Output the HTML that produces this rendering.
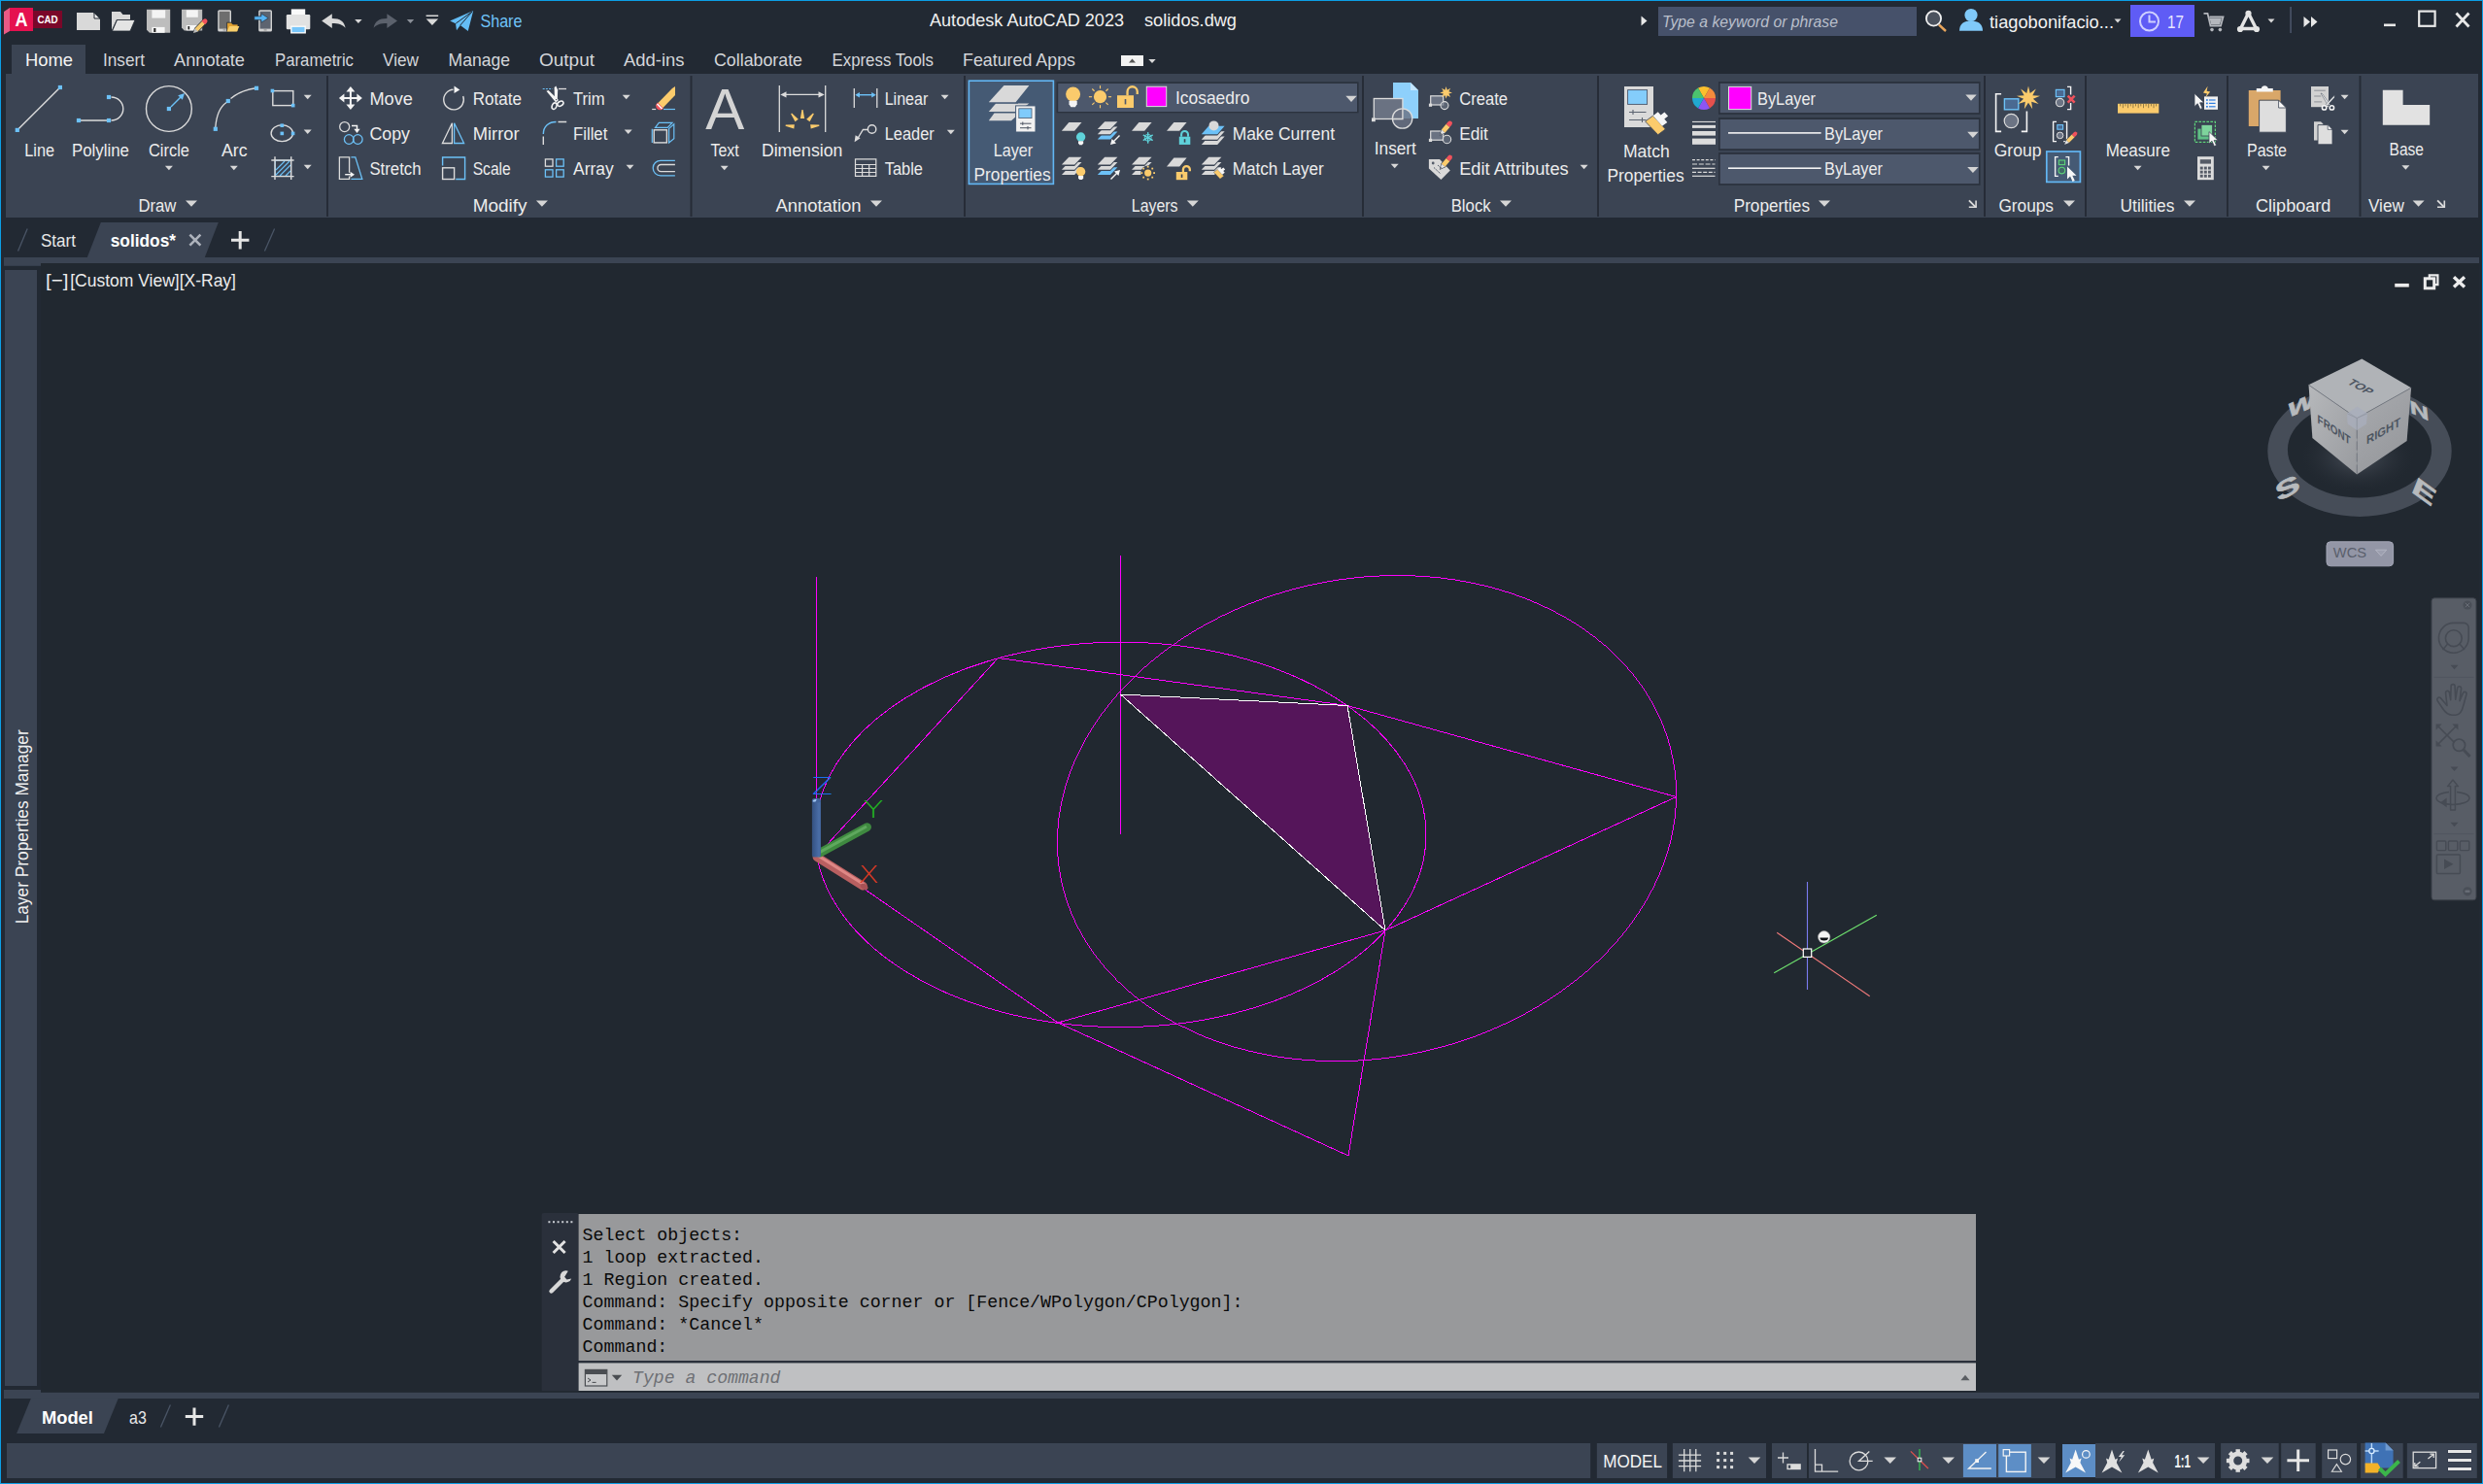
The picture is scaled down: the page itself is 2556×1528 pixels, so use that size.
<!DOCTYPE html>
<html lang="en"><head><meta charset="utf-8"><title>Autodesk AutoCAD 2023 - solidos.dwg</title>
<style>
html,body{margin:0;padding:0;background:#222933;}
body{width:2556px;height:1528px;position:relative;overflow:hidden;
 font-family:"Liberation Sans",sans-serif;}
.sec{position:absolute;overflow:hidden}
svg{display:block;position:absolute;left:0;top:0}
text{font-family:"Liberation Sans",sans-serif;white-space:pre}
text.mono{font-family:"Liberation Mono","DejaVu Sans Mono",monospace}
text.ucs{font-family:"DejaVu Sans Light","DejaVu Sans","Liberation Sans",sans-serif;font-weight:200}
.frame{position:absolute;left:0;top:0;width:2554px;height:1526px;border:1px solid #0c9fe6;pointer-events:none}
</style></head>
<body>
<div class="sec titlebar" style="left:0px;top:0px;width:2556px;height:44px"><svg width="2556" height="44" viewBox="0 0 2556 44"><rect x="0" y="0" width="2556" height="44" fill="#222933"/><path d="M4 12L10 8L10 32L4 35.5z" fill="#ea5a85"/><rect x="10" y="8" width="24" height="24" fill="#e5114f"/><rect x="34" y="11" width="30" height="18" fill="#7a0729"/><text x="15.5" y="26.8" font-size="19.5" fill="#fff" textLength="13" lengthAdjust="spacingAndGlyphs" font-weight="700">A</text><text x="38.4" y="24.2" font-size="10.8" fill="#fff" textLength="21.2" lengthAdjust="spacingAndGlyphs" font-weight="700">CAD</text><path d="M79 13h17l7 7v11h-24z" fill="#d9d9d9"/><path d="M97 13.2l5.8 5.8h-5.8z" fill="#efefef" stroke="#222933" stroke-width="1"/><path d="M115 31V12h9l2.5 3h7.5v5h-14z" fill="#d9d9d9"/><path d="M115.5 32l5-11.5h18.5l-5 11.5z" fill="#e4e4e4" stroke="#222933" stroke-width="0.8"/><path d="M151 9.8h24.2v24h-21.2l-3-3z" fill="#bdbdbd"/><rect x="156.4" y="10.4" width="13.8" height="8.2" fill="#f4f4f4"/><rect x="156.4" y="27.9" width="13.2" height="5.9" fill="#f6f6f6"/><rect x="158.2" y="29" width="2.2" height="4" fill="#2c2c2c"/><path d="M187 9.8h21.2v21.6h-18.4l-2.800-2.800z" fill="#bdbdbd"/><rect x="191.8" y="10.4" width="12" height="7.4" fill="#f4f4f4"/><rect x="191.8" y="26" width="11.6" height="5.4" fill="#f6f6f6"/><rect x="193.4" y="27" width="1.8" height="3.4" fill="#2c2c2c"/><path d="M199 34l1.600-5 8.200-8.400 3.400 3.400-8.200 8.400z" fill="#f5c869" stroke="#222933" stroke-width="0.9"/><path d="M199 34l1.600-5 3.400 3.400z" fill="#bbbbbb"/><path d="M207.600 21.800l1.800-1.800a2.400 2.400 0 0 1 3.400 3.400l-1.800 1.800z" fill="#f0525c"/><rect x="224.2" y="10.2" width="13.8" height="22.4" fill="#d2d2d2" rx="1.6"/><rect x="225.6" y="11.8" width="11" height="17.8" fill="#6e6e6e"/><rect x="229.6" y="30.4" width="3" height="1" fill="#888"/><path d="M233.600 32.600v-9.400h4.400l1.600 1.800h5.400v7.600z" fill="#e0a030" stroke="#222933" stroke-width="0.8"/><path d="M233.600 32.600l2.600-5.600h10.200l-2.600 5.600z" fill="#f8cf6c"/><rect x="266.2" y="10.2" width="13.8" height="22.4" fill="#d2d2d2" rx="1.6"/><rect x="267.6" y="11.8" width="11" height="17.8" fill="#5d6470"/><rect x="271.6" y="30.4" width="3" height="1" fill="#888"/><path d="M261.800 16.800h7.200v-2.800l7.200 4.600-7.200 4.600v-2.800h-7.200z" fill="#55b4f4" stroke="#222933" stroke-width="0.6"/><rect x="299.8" y="9.4" width="14.4" height="7" fill="#fafafa"/><rect x="294.8" y="15" width="24.5" height="15.2" fill="#e2e2e2" rx="1.2"/><rect x="299.8" y="27.2" width="14.4" height="6.6" fill="#78c6fa" stroke="#fafafa" stroke-width="1.4"/><path d="M331.200 21.600l10.600-7.400v4.800c8.600 0 12.600 3.200 13.800 9.800-3.200-3.600-7.200-4.800-13.800-4.800v5z" fill="#d9d9d9"/><path d="M365.2 19.9h7.4l-3.7 4.2z" fill="#d8d8d8"/><path d="M409 21.600l-10.600-7.400v4.800c-8.600 0-12.600 3.200-13.800 9.800 3.200-3.600 7.200-4.800 13.800-4.800v5z" fill="#5b616c"/><path d="M418.8 19.9h7.4l-3.7 4.2z" fill="#8a8f98"/><rect x="438.6" y="15.5" width="12.6" height="1.5" fill="#d9d9d9"/><path d="M438.7 19.5h12.4l-6.2 6.6z" fill="#d9d9d9"/><path d="M463.200 21.600l24-10.600-5.400 21-8-6-3.800 5.200-1-7z" fill="#64bdf6"/><path d="M469.200 24.200l17-12.400-12.400 14.200" fill="none" stroke="#222933" stroke-width="1"/><text x="494.4" y="28.4" font-size="18.2" fill="#6fc3f8" textLength="43.1" lengthAdjust="spacingAndGlyphs">Share</text><text x="957" y="26.55" font-size="18.2" fill="#f0f0f0" textLength="200" lengthAdjust="spacingAndGlyphs">Autodesk AutoCAD 2023</text><text x="1178" y="26.55" font-size="18.2" fill="#f0f0f0" textLength="95" lengthAdjust="spacingAndGlyphs">solidos.dwg</text><path d="M1689.5 16.5l6 5-6 5z" fill="#e8e8e8"/><rect x="1707" y="7" width="266" height="30" fill="#46516a"/><text x="1711" y="28.44" font-size="16.5" fill="#b9bfca" textLength="181" lengthAdjust="spacingAndGlyphs" font-style="italic">Type a keyword or phrase</text><circle cx="1990.5" cy="19" r="7.6" fill="#4b525e" stroke="#f2f2f2" stroke-width="1.8"/><line x1="1996" y1="25.5" x2="2003" y2="32" stroke="#e8a55c" stroke-width="2.4" /><circle cx="2029" cy="15.5" r="6.6" fill="#80c9f9"/><path d="M2017 31.800c0-7.400 5-10.200 12-10.200s12 2.800 12 10.200z" fill="#80c9f9"/><text x="2048" y="28.84" font-size="19" fill="#f2f2f2" textLength="128" lengthAdjust="spacingAndGlyphs">tiagobonifacio...</text><path d="M2176.5 19.5h7l-3.5 4z" fill="#d8d8d8"/><rect x="2193" y="5" width="66" height="33" fill="#5f5cf5"/><circle cx="2212.5" cy="22" r="9.5" fill="none" stroke="#cfd0ff" stroke-width="2"/><path d="M2212.5 15.5v7h6.5" fill="none" stroke="#cfd0ff" stroke-width="2"/><text x="2231" y="28.66" font-size="18.5" fill="#e6e6ff" textLength="17" lengthAdjust="spacingAndGlyphs">17</text><path d="M2268.500 13.800h4l3 12.800h10.500l2.500-9.200h-14" fill="none" stroke="#b4b7bd" stroke-width="1.8"/><path d="M2274.400 18.400h12.600l-2 7h-8.800z" fill="#b4b7bd"/><circle cx="2277" cy="30.6" r="1.8" fill="#b4b7bd"/><circle cx="2285.4" cy="30.6" r="1.8" fill="#b4b7bd"/><path d="M2306.5 29.5L2314.5 13.5L2322.5 29.5Z" fill="none" stroke="#e4e4e4" stroke-width="3.4" stroke-linejoin="round"/><circle cx="2314.5" cy="13.8" r="3.1" fill="#e4e4e4"/><circle cx="2306" cy="30" r="3.1" fill="#e4e4e4"/><circle cx="2323" cy="30" r="3.1" fill="#e4e4e4"/><path d="M2334.5 19.5h7l-3.5 4z" fill="#d8d8d8"/><rect x="2357.3" y="7" width="1.6" height="27" fill="#4a5468"/><path d="M2371.5 17l6.5 5.5-6.5 5.5zM2379 17l6.5 5.5-6.5 5.5z" fill="#e8e8e8"/><rect x="2454" y="24.5" width="12" height="2.6" fill="#e8e8e8"/><rect x="2490.2" y="11.6" width="16.4" height="15.2" fill="none" stroke="#e8e8e8" stroke-width="2.2"/><path d="M2528.5 13.5l13 14M2541.5 13.5l-13 14" fill="none" stroke="#e8e8e8" stroke-width="2.8"/></svg></div>
<div class="sec ribbontabs" style="left:0px;top:44px;width:2556px;height:32px"><svg width="2556" height="32" viewBox="0 44 2556 32"><rect x="0" y="44" width="2556" height="32" fill="#222933"/><rect x="12" y="46" width="76" height="30" fill="#3b4453"/><text x="26" y="67.55" font-size="18.2" fill="#f4f4f4" textLength="49" lengthAdjust="spacingAndGlyphs">Home</text><text x="106" y="67.55" font-size="18.2" fill="#d4d6da" textLength="43" lengthAdjust="spacingAndGlyphs">Insert</text><text x="179" y="67.55" font-size="18.2" fill="#d4d6da" textLength="73" lengthAdjust="spacingAndGlyphs">Annotate</text><text x="283" y="67.55" font-size="18.2" fill="#d4d6da" textLength="81" lengthAdjust="spacingAndGlyphs">Parametric</text><text x="394" y="67.55" font-size="18.2" fill="#d4d6da" textLength="37" lengthAdjust="spacingAndGlyphs">View</text><text x="461.5" y="67.55" font-size="18.2" fill="#d4d6da" textLength="63.5" lengthAdjust="spacingAndGlyphs">Manage</text><text x="555" y="67.55" font-size="18.2" fill="#d4d6da" textLength="57" lengthAdjust="spacingAndGlyphs">Output</text><text x="642" y="67.55" font-size="18.2" fill="#d4d6da" textLength="62.5" lengthAdjust="spacingAndGlyphs">Add-ins</text><text x="735" y="67.55" font-size="18.2" fill="#d4d6da" textLength="91" lengthAdjust="spacingAndGlyphs">Collaborate</text><text x="856.5" y="67.55" font-size="18.2" fill="#d4d6da" textLength="104.5" lengthAdjust="spacingAndGlyphs">Express Tools</text><text x="991" y="67.55" font-size="18.2" fill="#d4d6da" textLength="116" lengthAdjust="spacingAndGlyphs">Featured Apps</text><rect x="1154" y="57" width="23" height="11" fill="#f2f2f2"/><path d="M1162 64.5l3.5-4 3.5 4z" fill="#555"/><path d="M1182.3 60.9h7.4l-3.7 4.2z" fill="#d8d8d8"/></svg></div>
<div class="sec ribbon" style="left:0px;top:76px;width:2556px;height:152px"><svg width="2556" height="152" viewBox="0 76 2556 152"><rect x="0" y="76" width="2556" height="152" fill="#222933"/><rect x="6" y="76" width="2545" height="148" fill="#3b4453"/><rect x="336" y="78" width="2" height="145" fill="#262c37"/><rect x="710.5" y="78" width="2" height="145" fill="#262c37"/><rect x="992" y="78" width="2" height="145" fill="#262c37"/><rect x="1402" y="78" width="2" height="145" fill="#262c37"/><rect x="1644" y="78" width="2" height="145" fill="#262c37"/><rect x="2042" y="78" width="2" height="145" fill="#262c37"/><rect x="2146" y="78" width="2" height="145" fill="#262c37"/><rect x="2292" y="78" width="2" height="145" fill="#262c37"/><rect x="2428.5" y="78" width="2" height="145" fill="#262c37"/><line x1="17.8" y1="133.9" x2="61.9" y2="90" stroke="#dcdcdc" stroke-width="1.4" /><rect x="59.8" y="87.9" width="4.2" height="4.2" fill="#6cc1f7"/><rect x="15.7" y="131.8" width="4.2" height="4.2" fill="#6cc1f7"/><text x="25.3" y="161.2" font-size="18.3" fill="#ececec" textLength="30.8" lengthAdjust="spacingAndGlyphs">Line</text><path d="M81 124H112M114.5 124A12.3 12 0 0 0 114.5 100" fill="none" stroke="#dcdcdc" stroke-width="1.4"/><rect x="109.9" y="97.9" width="4.2" height="4.2" fill="#6cc1f7"/><rect x="78.9" y="121.9" width="4.2" height="4.2" fill="#6cc1f7"/><rect x="109.9" y="121.9" width="4.2" height="4.2" fill="#6cc1f7"/><text x="74" y="161.2" font-size="18.3" fill="#ececec" textLength="59" lengthAdjust="spacingAndGlyphs">Polyline</text><circle cx="173.9" cy="112" r="23.4" fill="none" stroke="#dcdcdc" stroke-width="1.4"/><line x1="176" y1="110" x2="187" y2="99" stroke="#6cc1f7" stroke-width="1.4" /><path d="M190 96l-6.8 2.2 4.6 4.6z" fill="#6cc1f7"/><rect x="171.8" y="109.9" width="4.2" height="4.2" fill="#6cc1f7"/><text x="153" y="161.2" font-size="18.3" fill="#ececec" textLength="42" lengthAdjust="spacingAndGlyphs">Circle</text><path d="M169.9 170.75h8l-4 4.5z" fill="#d8d8d8"/><path d="M221.8 131C223 116 228 109 233 105.5M237.5 101.5C244 96 252 92.5 262 91" fill="none" stroke="#dcdcdc" stroke-width="1.4"/><rect x="261.9" y="88.7" width="4.2" height="4.2" fill="#6cc1f7"/><rect x="232.7" y="101.9" width="4.2" height="4.2" fill="#6cc1f7"/><rect x="219.7" y="130.7" width="4.2" height="4.2" fill="#6cc1f7"/><text x="228" y="161.2" font-size="18.3" fill="#ececec" textLength="26.5" lengthAdjust="spacingAndGlyphs">Arc</text><path d="M236.8 170.75h8l-4 4.5z" fill="#d8d8d8"/><rect x="280.8" y="93.6" width="21" height="15" fill="none" stroke="#dcdcdc" stroke-width="1.4"/><rect x="278.6" y="91.7" width="3.6" height="3.6" fill="#6cc1f7"/><rect x="299.9" y="106.8" width="3.6" height="3.6" fill="#6cc1f7"/><path d="M312.7 97.75h8l-4 4.5z" fill="#d8d8d8"/><ellipse cx="290.3" cy="137.2" rx="11.2" ry="8.4" fill="none" stroke="#dcdcdc" stroke-width="1.4"/><rect x="288.5" y="127.4" width="3.6" height="3.6" fill="#6cc1f7"/><rect x="288.5" y="135.6" width="3.6" height="3.6" fill="#6cc1f7"/><rect x="299.8" y="135.6" width="3.6" height="3.6" fill="#6cc1f7"/><path d="M312.7 133.55h8l-4 4.5z" fill="#d8d8d8"/><path d="M283.3 165.2h16.2v16.2h-16.2zM284 175l9-9M284 180l14-14M288 181l11-11M294 181l5-5" fill="none" stroke="#6cc1f7" stroke-width="1.1"/><path d="M279.3 165h23.3M279.3 181.6h23.3M283 161.2v23.7M299.7 161.2v23.7" fill="none" stroke="#dcdcdc" stroke-width="1.4"/><path d="M312.7 169.75h8l-4 4.5z" fill="#d8d8d8"/><text x="142.4" y="217.6" font-size="18.3" fill="#ececec" textLength="39" lengthAdjust="spacingAndGlyphs">Draw</text><path d="M191 206.5h12l-6 6.2z" fill="#d6d6d6"/><path d="M360.9 92.9V108.9M352.9 100.9H368.9" fill="none" stroke="#f4f4f4" stroke-width="2"/><path d="M360.9 88.9l4.5 5.5h-9zM360.9 112.9l4.5 -5.5h-9zM348.9 100.9l5.5 -4.5v9zM372.9 100.9l-5.5 -4.5v9z" fill="#f4f4f4"/><text x="380.4" y="107.8" font-size="18.3" fill="#ececec" textLength="44.6" lengthAdjust="spacingAndGlyphs">Move</text><circle cx="354.7" cy="130.6" r="5" fill="none" stroke="#dcdcdc" stroke-width="1.3"/><path d="M362 129.5h5.5v4" fill="none" stroke="#f4f4f4" stroke-width="1.5"/><path d="M364.3 132.8h6.4l-3.2 4.2z" fill="#f4f4f4"/><circle cx="359.2" cy="143.5" r="4.8" fill="none" stroke="#6cc1f7" stroke-width="1.3"/><circle cx="368.3" cy="143.5" r="4.8" fill="none" stroke="#6cc1f7" stroke-width="1.3"/><text x="380.4" y="144.3" font-size="18.3" fill="#ececec" textLength="41.6" lengthAdjust="spacingAndGlyphs">Copy</text><path d="M359.600 181.600v2.800h-10.200v-22.600h10.200v16" fill="none" stroke="#dcdcdc" stroke-width="1.3"/><path d="M361.400 161.800h4.400l7 22.600h-11.400" fill="none" stroke="#6cc1f7" stroke-width="1.3"/><path d="M355.200 179.700h6" fill="none" stroke="#f4f4f4" stroke-width="1.4"/><path d="M360.600 176.700l4.400 3-4.400 3z" fill="#f4f4f4"/><text x="380.4" y="180" font-size="18.3" fill="#ececec" textLength="53.1" lengthAdjust="spacingAndGlyphs">Stretch</text><path d="M466.5 92.3A10.3 10.3 0 1 0 476.7 99" fill="none" stroke="#dcdcdc" stroke-width="1.4"/><path d="M467.5 88.6l5.8 3.8-5.8 3.6z" fill="#f4f4f4"/><text x="486.7" y="107.8" font-size="18.3" fill="#ececec" textLength="50.3" lengthAdjust="spacingAndGlyphs">Rotate</text><path d="M465.400 126.800V147.500H455.400z" fill="none" stroke="#dcdcdc" stroke-width="1.3"/><path d="M467.600 126.800V147.500H477.600z" fill="none" stroke="#6cc1f7" stroke-width="1.3"/><text x="486.7" y="144.3" font-size="18.3" fill="#ececec" textLength="48" lengthAdjust="spacingAndGlyphs">Mirror</text><path d="M455.600 170.400v-8.400h23v22.500h-9.400" fill="none" stroke="#6cc1f7" stroke-width="1.4"/><rect x="455.6" y="172.8" width="12" height="11.7" fill="none" stroke="#dcdcdc" stroke-width="1.4"/><text x="486.7" y="180" font-size="18.3" fill="#ececec" textLength="39.1" lengthAdjust="spacingAndGlyphs">Scale</text><path d="M558.7 91.5h10" fill="none" stroke="#6cc1f7" stroke-width="1.2" stroke-dasharray="2 1.2"/><path d="M575 91.5h8" fill="none" stroke="#dcdcdc" stroke-width="1.3"/><path d="M562.4 93.8L564.6 93L575 103L572.2 105.4z" fill="#f4f4f4"/><path d="M570.6 90L572.3 88.6L574.2 92.4L573.7 104L571 104z" fill="#f4f4f4"/><ellipse cx="570.6" cy="109.2" rx="2.3" ry="3.4" fill="none" stroke="#f4f4f4" stroke-width="1.5" transform="rotate(22 570.6 109.2)"/><ellipse cx="576.9" cy="106.7" rx="3.3" ry="2.3" fill="none" stroke="#f4f4f4" stroke-width="1.5" transform="rotate(-32 576.9 106.7)"/><circle cx="572.6" cy="102.6" r="0.7" fill="#3b4453"/><text x="590" y="107.8" font-size="18.3" fill="#ececec" textLength="32.7" lengthAdjust="spacingAndGlyphs">Trim</text><path d="M640.7 97.75h8l-4 4.5z" fill="#d8d8d8"/><path d="M559.3 138C559.3 130 565 125.5 572.5 125.5" fill="none" stroke="#6cc1f7" stroke-width="1.4"/><path d="M559.3 140.5V149M574.5 125.5H583.2" fill="none" stroke="#dcdcdc" stroke-width="1.4"/><text x="590" y="144.3" font-size="18.3" fill="#ececec" textLength="35.3" lengthAdjust="spacingAndGlyphs">Fillet</text><path d="M642.7 133.45h8l-4 4.5z" fill="#d8d8d8"/><rect x="561.4" y="163.9" width="7.6" height="7.3" fill="none" stroke="#dcdcdc" stroke-width="1.3"/><rect x="572.6" y="163.9" width="7.6" height="7.3" fill="none" stroke="#6cc1f7" stroke-width="1.3"/><rect x="561.4" y="174.8" width="7.6" height="7.3" fill="none" stroke="#6cc1f7" stroke-width="1.3"/><rect x="572.6" y="174.8" width="7.6" height="7.3" fill="none" stroke="#6cc1f7" stroke-width="1.3"/><text x="590" y="180" font-size="18.3" fill="#ececec" textLength="41.7" lengthAdjust="spacingAndGlyphs">Array</text><path d="M644.5 169.75h8l-4 4.5z" fill="#d8d8d8"/><path d="M675 108.5l17-17.5 3-2v9l-14 14.5z" fill="#fbcb6c"/><path d="M677 106.5a3.4 3.4 0 1 0 5 5z" fill="#f0525c" stroke="#f0525c" stroke-width="1.5"/><path d="M676.5 107l5 5" fill="none" stroke="#fff" stroke-width="1.6"/><path d="M671.2 112.5h4" fill="none" stroke="#dcdcdc" stroke-width="1.2"/><path d="M683 112.5h12" fill="none" stroke="#6cc1f7" stroke-width="1.2"/><path d="M674.500 131.400l3.800-5.100h13.700l-4.800 5.100zM688.600 132.400l5.200-4.600v14.800l-5.200 4.400zM671.300 132.800v14.200" fill="none" stroke="#6cc1f7" stroke-width="1.2"/><rect x="673.2" y="133.8" width="13.2" height="13.1" fill="none" stroke="#dcdcdc" stroke-width="1.4"/><path d="M694.9 165.3H680a7.8 7.8 0 0 0 0 15.6h14.9" fill="none" stroke="#6cc1f7" stroke-width="1.3"/><path d="M694.9 169.5H680.5a3.6 3.6 0 0 0 0 7.2h14.4" fill="none" stroke="#dcdcdc" stroke-width="1.3"/><text x="486.7" y="217.6" font-size="18.3" fill="#ececec" textLength="55.9" lengthAdjust="spacingAndGlyphs">Modify</text><path d="M551.9 206.5h12l-6 6.2z" fill="#d6d6d6"/><text x="726.3" y="132.9" font-size="58.6" fill="#d4d4d4" textLength="40" lengthAdjust="spacingAndGlyphs">A</text><text x="731.4" y="160.5" font-size="18.3" fill="#ececec" textLength="29.3" lengthAdjust="spacingAndGlyphs">Text</text><path d="M741.7 170.75h8l-4 4.5z" fill="#d8d8d8"/><path d="M802.3 88v48M849.7 88v48M808 97.4h36" fill="none" stroke="#dcdcdc" stroke-width="1.3"/><path d="M803.3 97.4l6.2-3.2v6.4zM848.7 97.4l-6.2-3.2v6.4z" fill="#dcdcdc"/><path d="M823.9 122L828.1 122L826.6 113L825.4 113z" fill="#fbcb6c"/><path d="M830.19 122.72L833.5 125.31L837.86 117.29L836.92 116.55z" fill="#fbcb6c"/><path d="M818.5 125.31L821.81 122.72L815.08 116.55L814.14 117.29z" fill="#fbcb6c"/><path d="M834.13 128.24L834.71 132.4L843.41 129.66L843.25 128.47z" fill="#fbcb6c"/><path d="M817.29 132.4L817.87 128.24L808.75 128.47L808.59 129.66z" fill="#fbcb6c"/><text x="783.9" y="160.5" font-size="18.3" fill="#ececec" textLength="83.4" lengthAdjust="spacingAndGlyphs">Dimension</text><path d="M879.3 91v20M902.8 91v20" fill="none" stroke="#dcdcdc" stroke-width="1.3"/><path d="M883 97.7h16" fill="none" stroke="#6cc1f7" stroke-width="1.4"/><path d="M880.3 97.7l4.6-2.7v5.4zM901.8 97.7l-4.6-2.7v5.4z" fill="#6cc1f7"/><text x="910.7" y="107.8" font-size="18.3" fill="#ececec" textLength="44.6" lengthAdjust="spacingAndGlyphs">Linear</text><path d="M968.6 97.75h8l-4 4.5z" fill="#d8d8d8"/><circle cx="897.6" cy="133" r="4.2" fill="none" stroke="#dcdcdc" stroke-width="1.4"/><path d="M893.4 133.5h-5l-5.5 9" fill="none" stroke="#dcdcdc" stroke-width="1.4"/><path d="M879.6 146.2l1-7 5 3z" fill="#dcdcdc"/><text x="910.7" y="144.3" font-size="18.3" fill="#ececec" textLength="51.1" lengthAdjust="spacingAndGlyphs">Leader</text><path d="M974.8 133.75h8l-4 4.5z" fill="#d8d8d8"/><path d="M880.5 163.8h21.3v17.6h-21.3zM880.5 169.5h21.3M880.5 173.5h21.3M880.5 177.5h21.3M887.6 169.5v12M894.7 169.5v12" fill="none" stroke="#dcdcdc" stroke-width="1.2"/><text x="910.7" y="180" font-size="18.3" fill="#ececec" textLength="39.3" lengthAdjust="spacingAndGlyphs">Table</text><text x="798.5" y="217.6" font-size="18.3" fill="#ececec" textLength="88" lengthAdjust="spacingAndGlyphs">Annotation</text><path d="M896 206.5h12l-6 6.2z" fill="#d6d6d6"/><rect x="997.4" y="83.2" width="87" height="106.2" fill="#455a74" stroke="#62b6f3" stroke-width="1.6"/><path d="M1017.8 124.2L1023.5 116.5L1050 116.5L1041 124.2z" fill="#d9d9d9"/><path d="M1017.8 115L1025.2 106.5L1059.4 106.5L1047.5 115z" fill="#d9d9d9"/><path d="M1018 106h30" fill="none" stroke="#455a74" stroke-width="1.3"/><path d="M1017.8 105.2L1033.5 88L1059.4 88L1045.6 105.2z" fill="#d9d9d9"/><rect x="1045.6" y="108.9" width="20.4" height="27.1" fill="#f1f1f1" stroke="#455a74" stroke-width="1"/><rect x="1048.8" y="111.8" width="13.2" height="9.8" fill="#7fcbfb" stroke="#4a5a70" stroke-width="0.8"/><path d="M1050 127.2h11.5M1050 131.7h11.5M1052.8 125.5v3.4M1058 130v3.4" fill="none" stroke="#4d5562" stroke-width="1"/><text x="1022.7" y="161" font-size="18.3" fill="#ececec" textLength="40.5" lengthAdjust="spacingAndGlyphs">Layer</text><text x="1002.5" y="185.9" font-size="18.3" fill="#ececec" textLength="79.1" lengthAdjust="spacingAndGlyphs">Properties</text><rect x="1087.6" y="84.3" width="311" height="32" fill="#2b323e"/><rect x="1089.2" y="86" width="307.8" height="29" fill="#4d586c"/><circle cx="1104.6" cy="97" r="7.5" fill="#fbcb6c"/><path d="M1100.475 103.75h8.25v3.375l-1.875 3.0h-4.5l-1.875 -3.0z" fill="#f4f4f4"/><circle cx="1132.5" cy="99.7" r="6.6" fill="#fbcb6c"/><line x1="1140.9" y1="99.7" x2="1144.1" y2="99.7" stroke="#fbcb6c" stroke-width="1.1" /><line x1="1138.44" y1="105.64" x2="1140.7" y2="107.9" stroke="#fbcb6c" stroke-width="1.1" /><line x1="1132.5" y1="108.1" x2="1132.5" y2="111.3" stroke="#fbcb6c" stroke-width="1.1" /><line x1="1126.56" y1="105.64" x2="1124.3" y2="107.9" stroke="#fbcb6c" stroke-width="1.1" /><line x1="1124.1" y1="99.7" x2="1120.9" y2="99.7" stroke="#fbcb6c" stroke-width="1.1" /><line x1="1126.56" y1="93.76" x2="1124.3" y2="91.5" stroke="#fbcb6c" stroke-width="1.1" /><line x1="1132.5" y1="91.3" x2="1132.5" y2="88.1" stroke="#fbcb6c" stroke-width="1.1" /><line x1="1138.44" y1="93.76" x2="1140.7" y2="91.5" stroke="#fbcb6c" stroke-width="1.1" /><rect x="1150" y="98.2" width="17" height="12.8" fill="#fbcb6c"/><rect x="1157.7" y="102.04" width="1.6" height="5.38" fill="#4d586c"/><path d="M1160.54 98.2v-3.84a5.1 5.1 0 0 1 10.2 0v2.5600000000000005" fill="none" stroke="#fbcb6c" stroke-width="2.3"/><rect x="1180.3" y="89.2" width="20.4" height="20.4" fill="#ff00ff" stroke="#dedede" stroke-width="1"/><text x="1210" y="107.2" font-size="18.6" fill="#ececec" textLength="76.4" lengthAdjust="spacingAndGlyphs">Icosaedro</text><path d="M1385.3 98.8h11.4l-5.7 6.2z" fill="#d4d4d4"/><path d="M1100.3 126L1113.5 126L1106.1 134.8L1092.9 134.8z" fill="#d9d9d9"/><circle cx="1112.6" cy="141" r="4.7" fill="#5fd2da"/><path d="M1110.0149999999999 145.23h5.170000000000001v2.115l-1.175 1.8800000000000001h-2.82l-1.175 -1.8800000000000001z" fill="#f4f4f4"/><path d="M1137.2 135.6L1150.4 135.6L1143 143.4L1129.8 143.4z" fill="#6cc1f7"/><path d="M1137.2 131.7L1150.4 131.7L1143 139.5L1129.8 139.5z" fill="#3b4453"/><path d="M1137.2 130.4L1150.4 130.4L1143 138.2L1129.8 138.2z" fill="#d9d9d9"/><path d="M1137.2 126.5L1150.4 126.5L1143 134.3L1129.8 134.3z" fill="#3b4453"/><path d="M1137.2 125.2L1150.4 125.2L1143 133L1129.8 133z" fill="#d9d9d9"/><path d="M1152.5 139.5l-6.5 6.5" fill="none" stroke="#f4f4f4" stroke-width="1.4"/><path d="M1143 149l1.6-6 4.4 4.4z" fill="#f4f4f4"/><path d="M1172.4 126L1185.6 126L1178.2 134.8L1165 134.8z" fill="#d9d9d9"/><circle cx="1181.7" cy="141.8" r="3.47" fill="none" stroke="#5fd2da" stroke-width="1"/><line x1="1176.85" y1="139" x2="1186.55" y2="144.6" stroke="#5fd2da" stroke-width="1.1" /><line x1="1181.7" y1="136.2" x2="1181.7" y2="147.4" stroke="#5fd2da" stroke-width="1.1" /><line x1="1186.55" y1="139" x2="1176.85" y2="144.6" stroke="#5fd2da" stroke-width="1.1" /><line x1="1186.55" y1="144.6" x2="1176.85" y2="139" stroke="#5fd2da" stroke-width="1.1" /><line x1="1181.7" y1="147.4" x2="1181.7" y2="136.2" stroke="#5fd2da" stroke-width="1.1" /><line x1="1176.85" y1="144.6" x2="1186.55" y2="139" stroke="#5fd2da" stroke-width="1.1" /><path d="M1208.4 126L1221.6 126L1214.2 134.8L1201 134.8z" fill="#d9d9d9"/><rect x="1213.8" y="140.7" width="11.5" height="8.2" fill="#5fd2da"/><rect x="1218.75" y="143.16" width="1.6" height="3.44" fill="#3b4453"/><path d="M1216.1 140.7v-2.296a3.4499999999999997 3.4499999999999997 0 0 1 6.8999999999999995 0v2.296" fill="none" stroke="#5fd2da" stroke-width="2.1"/><path d="M1244.2 140.6L1260.6 140.6L1253.2 149L1236.8 149z" fill="#d9d9d9"/><path d="M1244.2 136.6L1260.6 136.6L1253.2 145L1236.8 145z" fill="#3b4453"/><path d="M1244.2 135.3L1260.6 135.3L1253.2 143.7L1236.8 143.7z" fill="#d9d9d9"/><path d="M1244.2 131.2L1260.6 131.2L1253.2 139.6L1236.8 139.6z" fill="#3b4453"/><path d="M1244.2 129.8L1260.6 129.8L1253.2 138.2L1236.8 138.2z" fill="#6cc1f7"/><circle cx="1249.5" cy="129.4" r="5" fill="#d9d9d9"/><text x="1268.7" y="144.3" font-size="18.3" fill="#ececec" textLength="105.3" lengthAdjust="spacingAndGlyphs">Make Current</text><path d="M1100.3 172.2L1113.5 172.2L1106.1 180L1092.9 180z" fill="#d9d9d9"/><path d="M1100.3 168.3L1113.5 168.3L1106.1 176.1L1092.9 176.1z" fill="#3b4453"/><path d="M1100.3 167L1113.5 167L1106.1 174.8L1092.9 174.8z" fill="#d9d9d9"/><path d="M1100.3 163.1L1113.5 163.1L1106.1 170.9L1092.9 170.9z" fill="#3b4453"/><path d="M1100.3 161.8L1113.5 161.8L1106.1 169.6L1092.9 169.6z" fill="#d9d9d9"/><circle cx="1112.6" cy="176.8" r="4.7" fill="#fbcb6c"/><path d="M1110.0149999999999 181.03h5.170000000000001v2.115l-1.175 1.8800000000000001h-2.82l-1.175 -1.8800000000000001z" fill="#f4f4f4"/><path d="M1137.2 172.2L1150.4 172.2L1143 180L1129.8 180z" fill="#6cc1f7"/><path d="M1137.2 168.3L1150.4 168.3L1143 176.1L1129.8 176.1z" fill="#3b4453"/><path d="M1137.2 167L1150.4 167L1143 174.8L1129.8 174.8z" fill="#d9d9d9"/><path d="M1137.2 163.1L1150.4 163.1L1143 170.9L1129.8 170.9z" fill="#3b4453"/><path d="M1137.2 161.8L1150.4 161.8L1143 169.6L1129.8 169.6z" fill="#d9d9d9"/><path d="M1143.5 184.5l6.5-6.5" fill="none" stroke="#f4f4f4" stroke-width="1.4"/><path d="M1153 175l-1.6 6-4.4-4.4z" fill="#f4f4f4"/><path d="M1172.4 172.2L1185.6 172.2L1178.2 180L1165 180z" fill="#d9d9d9"/><path d="M1172.4 168.3L1185.6 168.3L1178.2 176.1L1165 176.1z" fill="#3b4453"/><path d="M1172.4 167L1185.6 167L1178.2 174.8L1165 174.8z" fill="#d9d9d9"/><path d="M1172.4 163.1L1185.6 163.1L1178.2 170.9L1165 170.9z" fill="#3b4453"/><path d="M1172.4 161.8L1185.6 161.8L1178.2 169.6L1165 169.6z" fill="#d9d9d9"/><circle cx="1181.7" cy="178.1" r="7.6" fill="#3b4453"/><circle cx="1181.7" cy="178.1" r="3.6" fill="#fbcb6c"/><rect x="1187.2" y="177.2" width="1.8" height="1.8" fill="#fbcb6c"/><rect x="1185.33" y="181.73" width="1.8" height="1.8" fill="#fbcb6c"/><rect x="1180.8" y="183.6" width="1.8" height="1.8" fill="#fbcb6c"/><rect x="1176.27" y="181.73" width="1.8" height="1.8" fill="#fbcb6c"/><rect x="1174.4" y="177.2" width="1.8" height="1.8" fill="#fbcb6c"/><rect x="1176.27" y="172.67" width="1.8" height="1.8" fill="#fbcb6c"/><rect x="1180.8" y="170.8" width="1.8" height="1.8" fill="#fbcb6c"/><rect x="1185.33" y="172.67" width="1.8" height="1.8" fill="#fbcb6c"/><path d="M1208.4 162.6L1221.6 162.6L1214.2 171.4L1201 171.4z" fill="#d9d9d9"/><rect x="1210.8" y="177" width="11.5" height="8.2" fill="#fbcb6c"/><rect x="1215.75" y="179.46" width="1.6" height="3.44" fill="#3b4453"/><path d="M1217.93 177v-2.4599999999999995a3.4499999999999997 3.4499999999999997 0 0 1 6.8999999999999995 0v1.64" fill="none" stroke="#fbcb6c" stroke-width="2.3"/><path d="M1244.2 172.2L1257.4 172.2L1250 180L1236.8 180z" fill="#d9d9d9"/><path d="M1244.2 168.3L1257.4 168.3L1250 176.1L1236.8 176.1z" fill="#3b4453"/><path d="M1244.2 167L1257.4 167L1250 174.8L1236.8 174.8z" fill="#d9d9d9"/><path d="M1244.2 163.1L1257.4 163.1L1250 170.9L1236.8 170.9z" fill="#3b4453"/><path d="M1244.2 161.8L1257.4 161.8L1250 169.6L1236.8 169.6z" fill="#d9d9d9"/><g transform="translate(1249.4 173.6) scale(0.8)" ><path d="M0 4.6l5-3.600 8 8.600-4.800 3.600z" fill="#fbcb6c" stroke="#3b4453" stroke-width="0.5"/><path d="M5 1l3.200-2.400 1.800 2 2.400-1.900 2.300 2.500-2.400 1.900 1.900 2.100-3.300 2.400z" fill="#f6f6f6"/></g><text x="1268.7" y="179.9" font-size="18.3" fill="#ececec" textLength="94.1" lengthAdjust="spacingAndGlyphs">Match Layer</text><text x="1164.8" y="217.6" font-size="18.3" fill="#ececec" textLength="47.7" lengthAdjust="spacingAndGlyphs">Layers</text><path d="M1221.8 206.5h12l-6 6.2z" fill="#d6d6d6"/><path d="M1434 84.9h18l8 8v29h-26z" fill="#8ed0fb"/><path d="M1452 84.9l8 8h-8z" fill="#c4e6fd"/><rect x="1414.3" y="101.5" width="29.6" height="21" fill="#6a7282" stroke="#dcdcdc" stroke-width="1.3"/><circle cx="1443.6" cy="122" r="10.2" fill="#6a7282" stroke="#dcdcdc" stroke-width="1.3" fill-opacity="0.82"/><path d="M1443.9 112v10.5h-10.5" fill="none" stroke="#dcdcdc" stroke-width="1.3"/><rect x="1412" y="121.4" width="3.8" height="3.8" fill="#dcdcdc"/><text x="1414.8" y="159.1" font-size="18.3" fill="#ececec" textLength="43.1" lengthAdjust="spacingAndGlyphs">Insert</text><path d="M1431.7 168.75h8l-4 4.5z" fill="#d8d8d8"/><rect x="1472.7" y="98.8" width="13" height="9.2" fill="#6a7282" stroke="#dcdcdc" stroke-width="1.2"/><rect x="1470.9" y="106.6" width="3.2" height="3.2" fill="#dcdcdc"/><circle cx="1487" cy="108.6" r="4" fill="#6a7282" stroke="#dcdcdc" stroke-width="1.1" fill-opacity="0.7"/><path d="M1488.6 89L1489.75 92.63L1493.13 90.87L1491.37 94.25L1495 95.4L1491.37 96.55L1493.13 99.93L1489.75 98.17L1488.6 101.8L1487.45 98.17L1484.07 99.93L1485.83 96.55L1482.2 95.4L1485.83 94.25L1484.07 90.87L1487.45 92.63z" fill="#fbcb6c"/><text x="1502.2" y="107.8" font-size="18.3" fill="#ececec" textLength="49.8" lengthAdjust="spacingAndGlyphs">Create</text><rect x="1472.7" y="135" width="13" height="9.2" fill="#6a7282" stroke="#dcdcdc" stroke-width="1.2"/><rect x="1470.9" y="142.8" width="3.2" height="3.2" fill="#dcdcdc"/><circle cx="1489.5" cy="143.5" r="4.2" fill="#6a7282" stroke="#dcdcdc" stroke-width="1.1" fill-opacity="0.7"/><path d="M1482.6 138.8L1487.53 136.67L1494.44 128.44L1490.76 125.36L1483.85 133.58z" fill="#3b4453" stroke="#3b4453" stroke-width="1.1"/><path d="M1487.53 136.67L1492.38 130.89L1488.7 127.81L1483.85 133.58z" fill="#fbcb6c"/><path d="M1482.6 138.8L1487.53 136.67L1483.85 133.58z" fill="#e4e4e4"/><path d="M1482.6 138.8L1484.46 138.01L1483.06 136.84z" fill="#6a6f78"/><path d="M1492.38 130.89L1494.44 128.44A2.4 2.4 0 0 0 1490.76 125.36L1488.7 127.81z" fill="#f0525c"/><text x="1502.2" y="144.3" font-size="18.3" fill="#ececec" textLength="29.7" lengthAdjust="spacingAndGlyphs">Edit</text><path d="M1470.9 164L1482 164L1492.8 175.6L1483.4 185L1470.9 173.6z" fill="#d9d9d9"/><circle cx="1475.2" cy="168" r="1.4" fill="#555d6a"/><path d="M1476 172.5l7 6.5M1480 170l4 3.6" fill="none" stroke="#555d6a" stroke-width="1" stroke-dasharray="2 1"/><path d="M1482.6 173.9L1487.53 171.77L1494.44 163.54L1490.76 160.46L1483.85 168.68z" fill="#3b4453" stroke="#3b4453" stroke-width="1.1"/><path d="M1487.53 171.77L1492.38 165.99L1488.7 162.91L1483.85 168.68z" fill="#fbcb6c"/><path d="M1482.6 173.9L1487.53 171.77L1483.85 168.68z" fill="#e4e4e4"/><path d="M1482.6 173.9L1484.46 173.11L1483.06 171.94z" fill="#6a6f78"/><path d="M1492.38 165.99L1494.44 163.54A2.4 2.4 0 0 0 1490.76 160.46L1488.7 162.91z" fill="#f0525c"/><text x="1502.2" y="180" font-size="18.3" fill="#ececec" textLength="112.5" lengthAdjust="spacingAndGlyphs">Edit Attributes</text><path d="M1626.6 169.75h8l-4 4.5z" fill="#d8d8d8"/><text x="1493.7" y="217.6" font-size="18.3" fill="#ececec" textLength="41" lengthAdjust="spacingAndGlyphs">Block</text><path d="M1544 206.5h12l-6 6.2z" fill="#d6d6d6"/><rect x="1672" y="89" width="30" height="42" fill="#dadada"/><rect x="1675.6" y="92.6" width="20" height="14.8" fill="#84cdfb" stroke="#4a5568" stroke-width="0.9"/><path d="M1677 115.5h17.5M1677 123.5h17.5M1681 113v5M1690.5 121v5" fill="none" stroke="#5b6370" stroke-width="1.1"/><g transform="translate(1693.6 117.6) scale(1.6)" ><path d="M0 4.6l5-3.600 8 8.600-4.800 3.600z" fill="#fbcb6c" stroke="#3b4453" stroke-width="0.5"/><path d="M5 1l3.200-2.400 1.800 2 2.400-1.900 2.300 2.500-2.400 1.900 1.900 2.100-3.300 2.400z" fill="#f6f6f6"/></g><text x="1670.9" y="161.7" font-size="18.3" fill="#ececec" textLength="47.9" lengthAdjust="spacingAndGlyphs">Match</text><text x="1654.4" y="186.5" font-size="18.3" fill="#ececec" textLength="79.2" lengthAdjust="spacingAndGlyphs">Properties</text><path d="M1754 101L1748 90.61A12 12 0 0 1 1760 90.61z" fill="#fbbf2d"/><path d="M1754 101L1760 90.61A12 12 0 0 1 1766 101z" fill="#f58b3c"/><path d="M1754 101L1766 101A12 12 0 0 1 1760 111.39z" fill="#e5504d"/><path d="M1754 101L1760 111.39A12 12 0 0 1 1748 111.39z" fill="#8d55f2"/><path d="M1754 101L1748 111.39A12 12 0 0 1 1742 101z" fill="#21a8d0"/><path d="M1754 101L1742 101A12 12 0 0 1 1748 90.61z" fill="#4cc36e"/><rect x="1742" y="124.9" width="24" height="1.1" fill="#dcdcdc"/><rect x="1742" y="128.9" width="24" height="3" fill="#dcdcdc"/><rect x="1742" y="135" width="24" height="4.6" fill="#dcdcdc"/><rect x="1742" y="142.6" width="24" height="6.2" fill="#dcdcdc"/><path d="M1742 164.6h23.5" fill="none" stroke="#dcdcdc" stroke-width="1.2" stroke-dasharray="3 1.6"/><path d="M1742 169h23.5" fill="none" stroke="#dcdcdc" stroke-width="1.2" stroke-dasharray="5 1.8"/><path d="M1742 173.3h23.5" fill="none" stroke="#dcdcdc" stroke-width="1.2" stroke-dasharray="24"/><path d="M1742 177.4h23.5" fill="none" stroke="#dcdcdc" stroke-width="1.2" stroke-dasharray="4 1.6"/><path d="M1742 181.3h23.5" fill="none" stroke="#dcdcdc" stroke-width="1.2" stroke-dasharray="24"/><rect x="1769" y="84" width="269.6" height="33.8" fill="#2b323e"/><rect x="1770.7" y="85.9" width="266.2" height="30.2" fill="#4d586c"/><rect x="1769" y="121.1" width="269.6" height="33.8" fill="#2b323e"/><rect x="1770.7" y="123" width="266.2" height="30.2" fill="#4d586c"/><rect x="1769" y="157" width="269.6" height="33.8" fill="#2b323e"/><rect x="1770.7" y="158.9" width="266.2" height="30.2" fill="#4d586c"/><rect x="1779.5" y="89.4" width="23.2" height="23.2" fill="#ff00ff" stroke="#dedede" stroke-width="1"/><text x="1809" y="107.6" font-size="18.6" fill="#ececec" textLength="60" lengthAdjust="spacingAndGlyphs">ByLayer</text><path d="M2023.3 97.5h11.4l-5.7 6.2z" fill="#d4d4d4"/><rect x="1779" y="136.1" width="95.6" height="1.6" fill="#f4f4f4"/><text x="1878" y="144" font-size="18.6" fill="#ececec" textLength="60" lengthAdjust="spacingAndGlyphs">ByLayer</text><path d="M2025.2 135.7h11.4l-5.7 6.2z" fill="#d4d4d4"/><rect x="1779" y="172.4" width="95.6" height="1.6" fill="#f4f4f4"/><text x="1878" y="180.2" font-size="18.6" fill="#ececec" textLength="60" lengthAdjust="spacingAndGlyphs">ByLayer</text><path d="M2025.2 171.9h11.4l-5.7 6.2z" fill="#d4d4d4"/><text x="1784.7" y="217.6" font-size="18.3" fill="#ececec" textLength="78.3" lengthAdjust="spacingAndGlyphs">Properties</text><path d="M1872 206.5h12l-6 6.2z" fill="#d6d6d6"/><path d="M2026.8999999999999 206.4l7 7" fill="none" stroke="#dcdcdc" stroke-width="1.9"/><path d="M2034.1 206.4v6.900h-7.300" fill="none" stroke="#dcdcdc" stroke-width="1.6"/><path d="M2060.1 96.8H2054.6V135.4H2060.1" fill="none" stroke="#f4f4f4" stroke-width="1.6"/><path d="M2080.8 135.4H2086.4V114.5" fill="none" stroke="#f4f4f4" stroke-width="1.6"/><rect x="2063.4" y="101.8" width="14.4" height="11" fill="#4a6a92" stroke="#6cc1f7" stroke-width="1.4"/><circle cx="2070.4" cy="124.5" r="7.2" fill="#6c7484" stroke="#dcdcdc" stroke-width="1.2"/><path d="M2088 88.6L2089.71 96.1L2095.84 91.45L2092.33 98.3L2100.01 98.68L2092.92 101.67L2098.57 106.9L2091.21 104.63L2092.17 112.26L2088 105.8L2083.83 112.26L2084.79 104.63L2077.43 106.9L2083.08 101.67L2075.99 98.68L2083.67 98.3L2080.16 91.45L2086.29 96.1z" fill="#fbcb6c"/><text x="2052.7" y="161" font-size="18.3" fill="#ececec" textLength="48.7" lengthAdjust="spacingAndGlyphs">Group</text><rect x="2116.4" y="92.4" width="8.6" height="7.2" fill="#4a6a92" stroke="#6cc1f7" stroke-width="1.2"/><circle cx="2120.6" cy="105.6" r="4.2" fill="#6c7484" stroke="#dcdcdc" stroke-width="1.1"/><path d="M2128 89.4h3.6v8M2131.6 106v6.6H2128" fill="none" stroke="#f4f4f4" stroke-width="1.4"/><path d="M2128.6 98.6l7 7M2135.6 98.6l-7 7" fill="none" stroke="#f0525c" stroke-width="2.6"/><path d="M2117.0 125.4H2113.6V145.6H2117.0" fill="none" stroke="#f4f4f4" stroke-width="1.4"/><path d="M2124.2 125.4H2127.6V145.6H2124.2" fill="none" stroke="#f4f4f4" stroke-width="1.4"/><rect x="2117.8" y="128.6" width="5.8" height="4.6" fill="#4a6a92" stroke="#6cc1f7" stroke-width="1.1"/><circle cx="2120.6" cy="139.4" r="3.3" fill="#6c7484" stroke="#dcdcdc" stroke-width="1"/><path d="M2125 149L2129.81 147.02L2137.81 139.01L2134.99 136.19L2126.98 144.19z" fill="#3b4453" stroke="#3b4453" stroke-width="1.1"/><path d="M2129.81 147.02L2135.55 141.28L2132.72 138.45L2126.98 144.19z" fill="#fbcb6c"/><path d="M2125 149L2129.81 147.02L2126.98 144.19z" fill="#e4e4e4"/><path d="M2125 149L2126.81 148.26L2125.74 147.19z" fill="#6a6f78"/><path d="M2135.55 141.28L2137.81 139.01A2.0 2.0 0 0 0 2134.99 136.19L2132.72 138.45z" fill="#f0525c"/><rect x="2106.8" y="156" width="34.6" height="31.4" fill="#455a74" stroke="#62b6f3" stroke-width="1.7"/><path d="M2118.7999999999997 161.6H2115.6V181.4H2118.7999999999997" fill="none" stroke="#f4f4f4" stroke-width="1.4"/><path d="M2126.4 161.6h3.2v9" fill="none" stroke="#f4f4f4" stroke-width="1.4"/><rect x="2119.4" y="165" width="6.2" height="4.6" fill="#3f6a66" stroke="#5ed27a" stroke-width="1.1"/><circle cx="2122.4" cy="175.6" r="3.3" fill="#3f6a66" stroke="#5ed27a" stroke-width="1.1"/><g transform="translate(2128 171.6) scale(0.95)" ><path d="M0 0v13.5l3.2-3 2.6 5.8 2.4-1.1-2.6-5.6h4.4z" fill="#f6f6f6"/></g><text x="2057.4" y="217.6" font-size="18.3" fill="#ececec" textLength="56.6" lengthAdjust="spacingAndGlyphs">Groups</text><path d="M2124 206.5h12l-6 6.2z" fill="#d6d6d6"/><rect x="2180" y="106.8" width="42.3" height="9.8" fill="#fbcb6c"/><rect x="2182.24" y="106.8" width="0.9" height="2.6" fill="#8a7440"/><rect x="2184.88" y="106.8" width="0.9" height="4.4" fill="#8a7440"/><rect x="2187.52" y="106.8" width="0.9" height="2.6" fill="#8a7440"/><rect x="2190.16" y="106.8" width="0.9" height="4.4" fill="#8a7440"/><rect x="2192.8" y="106.8" width="0.9" height="2.6" fill="#8a7440"/><rect x="2195.44" y="106.8" width="0.9" height="4.4" fill="#8a7440"/><rect x="2198.08" y="106.8" width="0.9" height="2.6" fill="#8a7440"/><rect x="2200.72" y="106.8" width="0.9" height="4.4" fill="#8a7440"/><rect x="2203.36" y="106.8" width="0.9" height="2.6" fill="#8a7440"/><rect x="2206" y="106.8" width="0.9" height="4.4" fill="#8a7440"/><rect x="2208.64" y="106.8" width="0.9" height="2.6" fill="#8a7440"/><rect x="2211.28" y="106.8" width="0.9" height="4.4" fill="#8a7440"/><rect x="2213.92" y="106.8" width="0.9" height="2.6" fill="#8a7440"/><rect x="2216.56" y="106.8" width="0.9" height="4.4" fill="#8a7440"/><rect x="2219.2" y="106.8" width="0.9" height="2.6" fill="#8a7440"/><text x="2167.7" y="161" font-size="18.3" fill="#ececec" textLength="66.2" lengthAdjust="spacingAndGlyphs">Measure</text><path d="M2196.6 170.75h8l-4 4.5z" fill="#d8d8d8"/><path d="M2272 96.5l-4-1 4.6-6.8-1 5 3.6 0.8-5.4 6.6z" fill="#fbcb6c"/><rect x="2269" y="99.4" width="14" height="13.4" fill="#f1f1f1"/><rect x="2271" y="102.2" width="1.8" height="1.6" fill="#2f7fe0"/><rect x="2274" y="102.4" width="6.6" height="1.2" fill="#2f7fe0"/><rect x="2271" y="105.6" width="1.8" height="1.6" fill="#2f7fe0"/><rect x="2274" y="105.8" width="6.6" height="1.2" fill="#2f7fe0"/><rect x="2271" y="109" width="1.8" height="1.6" fill="#2f7fe0"/><rect x="2274" y="109.2" width="6.6" height="1.2" fill="#2f7fe0"/><g transform="translate(2259 96.2) scale(1)" ><path d="M0 0v13.5l3.2-3 2.6 5.8 2.4-1.1-2.6-5.6h4.4z" fill="#f6f6f6" stroke="#3b4453" stroke-width="0.8"/></g><rect x="2259.4" y="125.4" width="21" height="21" fill="none" stroke="#5ed27a" stroke-width="1.2" stroke-dasharray="2.6 1.4"/><rect x="2262.4" y="132.6" width="11.6" height="11" fill="#5fbf85"/><rect x="2266" y="128.4" width="11.6" height="11.6" fill="#7ed49c" stroke="#3b4453" stroke-width="0.8"/><g transform="translate(2274 135.6) scale(0.92)" ><path d="M0 0v13.5l3.2-3 2.6 5.8 2.4-1.1-2.6-5.6h4.4z" fill="#f6f6f6" stroke="#3b4453" stroke-width="0.8"/></g><rect x="2262" y="161.2" width="16.8" height="24" fill="#dcdcdc"/><rect x="2264.8" y="164.2" width="11.2" height="4.4" fill="#555b66"/><rect x="2264.8" y="171.6" width="2.9" height="2.9" fill="#555b66"/><rect x="2268.9" y="171.6" width="2.9" height="2.9" fill="#555b66"/><rect x="2273" y="171.6" width="2.9" height="2.9" fill="#555b66"/><rect x="2264.8" y="175.7" width="2.9" height="2.9" fill="#555b66"/><rect x="2268.9" y="175.7" width="2.9" height="2.9" fill="#555b66"/><rect x="2273" y="175.7" width="2.9" height="2.9" fill="#555b66"/><rect x="2264.8" y="179.8" width="2.9" height="2.9" fill="#555b66"/><rect x="2268.9" y="179.8" width="2.9" height="2.9" fill="#555b66"/><rect x="2273" y="179.8" width="2.9" height="2.9" fill="#555b66"/><text x="2182.6" y="217.6" font-size="18.3" fill="#ececec" textLength="55.8" lengthAdjust="spacingAndGlyphs">Utilities</text><path d="M2248 206.5h12l-6 6.2z" fill="#d6d6d6"/><rect x="2314.8" y="93" width="32.8" height="37" fill="#d9a769"/><path d="M2322.8 94.4v-3.4h5a3.6 3.6 0 0 1 7 0h5v3.4z" fill="#f6f6f6"/><path d="M2325.6 103.2h20l7.8 7.8v25.2h-27.8z" fill="#dedede" stroke="#3b4453" stroke-width="0.9"/><path d="M2345.6 103.2l7.8 7.8h-7.8z" fill="#f8f8f8" stroke="#3b4453" stroke-width="0.8"/><text x="2313" y="161.3" font-size="18.3" fill="#ececec" textLength="41" lengthAdjust="spacingAndGlyphs">Paste</text><path d="M2328.6 170.75h8l-4 4.5z" fill="#d8d8d8"/><rect x="2379" y="89" width="18" height="21.2" fill="#d2d2d2"/><path d="M2382.200 93.200h11.600M2382.200 99h7M2382.200 104.900h8" fill="none" stroke="#8c8f96" stroke-width="1"/><path d="M2389 96L2390.6 96.6L2398.6 107.8L2396.6 108.6z" fill="#f6f6f6" stroke="#3b4453" stroke-width="0.5"/><path d="M2403.2 98L2403 100.6L2395.6 108.8L2394.2 107.6z" fill="#f6f6f6" stroke="#3b4453" stroke-width="0.5"/><circle cx="2392.6" cy="110.9" r="2.2" fill="#3b4453" stroke="#f6f6f6" stroke-width="1.5"/><circle cx="2400.4" cy="110.9" r="2.2" fill="#3b4453" stroke="#f6f6f6" stroke-width="1.5"/><path d="M2409.6 97.75h8l-4 4.5z" fill="#d8d8d8"/><path d="M2382 125.200h7l2.400 2.400v17h-9.400z" fill="#d2d2d2"/><path d="M2386 128.600h10.200l4.800 4.800v15.400h-15z" fill="#dedede" stroke="#3b4453" stroke-width="0.9"/><path d="M2396.200 128.600l4.800 4.800h-4.800z" fill="#f8f8f8" stroke="#3b4453" stroke-width="0.7"/><path d="M2409.6 133.75h8l-4 4.5z" fill="#d8d8d8"/><text x="2322" y="217.6" font-size="18.3" fill="#ececec" textLength="77.4" lengthAdjust="spacingAndGlyphs">Clipboard</text><path d="M2452.8 92.8h20.8v15.2h27.6v20.8h-48.4z" fill="#e2e2e2"/><text x="2459.5" y="160.3" font-size="18.3" fill="#ececec" textLength="35.5" lengthAdjust="spacingAndGlyphs">Base</text><path d="M2472.4 170.15h8l-4 4.5z" fill="#d8d8d8"/><text x="2438" y="217.6" font-size="18.3" fill="#ececec" textLength="36.8" lengthAdjust="spacingAndGlyphs">View</text><path d="M2483.6 206.5h12l-6 6.2z" fill="#d6d6d6"/><path d="M2509.1000000000004 206.4l7 7" fill="none" stroke="#dcdcdc" stroke-width="1.9"/><path d="M2516.3 206.4v6.900h-7.300" fill="none" stroke="#dcdcdc" stroke-width="1.6"/></svg></div>
<div class="sec doctabs" style="left:0px;top:228px;width:2556px;height:46px"><svg width="2556" height="46" viewBox="0 228 2556 46"><rect x="0" y="228" width="2556" height="46" fill="#222933"/><path d="M89.8 265L103.8 229L224.8 229L210.8 265z" fill="#3b4453"/><rect x="4" y="265" width="2548" height="6" fill="#3b4453"/><rect x="42" y="271" width="2510" height="3" fill="#212830"/><rect x="4" y="271" width="38" height="2.8" fill="#3b4453"/><line x1="18.5" y1="258.6" x2="28.2" y2="235.6" stroke="#4a5566" stroke-width="1.3" /><text x="42" y="254.4" font-size="18.6" fill="#e8e8e8" textLength="36" lengthAdjust="spacingAndGlyphs">Start</text><text x="113.7" y="254.4" font-size="18.6" fill="#ffffff" textLength="67.3" lengthAdjust="spacingAndGlyphs" font-weight="700">solidos*</text><path d="M195.4 241.6l11 11M206.4 241.6l-11 11" fill="none" stroke="#aeb3bc" stroke-width="2.6"/><path d="M238 247.2h18.4M247.2 238v18.4" fill="none" stroke="#e6e6e6" stroke-width="3"/><line x1="272.4" y1="258.6" x2="282.6" y2="235.6" stroke="#4a5566" stroke-width="1.3" /></svg></div>
<div class="sec viewport" style="left:0px;top:274px;width:2556px;height:1158px"><svg width="2556" height="1158" viewBox="0 274 2556 1158"><rect x="0" y="274" width="2556" height="1158" fill="#222933"/><rect x="42" y="271" width="2510" height="1163" fill="#212830"/><rect x="5" y="278" width="33" height="1149" fill="#3b4453"/><rect x="4" y="1431" width="38" height="2" fill="#3b4453"/><text transform="translate(28.9 951.3) rotate(-90)" x="0" y="0" font-size="17.6" fill="#f0f0f0" textLength="200" lengthAdjust="spacingAndGlyphs">Layer Properties Manager</text><text x="47" y="294.6" font-size="18.2" fill="#ececec" textLength="23.4" lengthAdjust="spacingAndGlyphs">[−]</text><text x="72.2" y="294.6" font-size="18.2" fill="#ececec" textLength="170.8" lengthAdjust="spacingAndGlyphs">[Custom View][X-Ray]</text><rect x="2464.8" y="291.4" width="15.4" height="4.6" fill="#ececec" stroke="#15181d" stroke-width="0.8"/><path d="M2500.800 286v-2.600h8.600v9.800h-2.400" fill="none" stroke="#ececec" stroke-width="2.2"/><rect x="2496.3" y="286.8" width="9.4" height="10" fill="none" stroke="#ececec" stroke-width="3"/><path d="M2526 285.200l11 10.200M2537 285.200l-11 10.200" fill="none" stroke="#ececec" stroke-width="3.4"/><path d="M1153.5 715L1387 726.5L1426 958z" fill="#55155a"/><g shape-rendering="crispEdges"><ellipse cx="1153.5" cy="859.4" rx="314.5" ry="198.2" fill="none" stroke="#ff00ff" stroke-width="1"/><ellipse cx="1407" cy="842.6" rx="321" ry="247" fill="none" stroke="#ff00ff" stroke-width="1" transform="rotate(-11 1407 842.6)"/><line x1="840.6" y1="593.6" x2="840.6" y2="826" stroke="#ff00ff" stroke-width="1" /><line x1="1153.5" y1="572" x2="1153.5" y2="859.4" stroke="#ff00ff" stroke-width="1" /><line x1="1027.5" y1="677.5" x2="1387" y2="726.5" stroke="#ff00ff" stroke-width="1" /><line x1="1387" y1="726.5" x2="1725.5" y2="820.5" stroke="#ff00ff" stroke-width="1" /><line x1="1725.5" y1="820.5" x2="1426" y2="958" stroke="#ff00ff" stroke-width="1" /><line x1="1426" y1="958" x2="1388" y2="1190" stroke="#ff00ff" stroke-width="1" /><line x1="1089" y1="1053" x2="1388" y2="1190" stroke="#ff00ff" stroke-width="1" /><line x1="1426" y1="958" x2="1089" y2="1053" stroke="#ff00ff" stroke-width="1" /><line x1="1089" y1="1053" x2="840.6" y2="881.4" stroke="#ff00ff" stroke-width="1" /><line x1="1027.5" y1="677.5" x2="840.6" y2="881.4" stroke="#ff00ff" stroke-width="1" /><line x1="1153.5" y1="715" x2="1387" y2="726.5" stroke="#ffffff" stroke-width="1" /><line x1="1387" y1="726.5" x2="1426" y2="958" stroke="#ffffff" stroke-width="1" /><line x1="1426" y1="958" x2="1153.5" y2="715" stroke="#ffffff" stroke-width="1" /></g><defs><linearGradient id="uz" x1="0" y1="0" x2="1" y2="0"><stop offset="0" stop-color="#35527f"/><stop offset="0.35" stop-color="#3d5d92"/><stop offset="0.8" stop-color="#4b6fa8"/><stop offset="1" stop-color="#3f6096"/></linearGradient></defs><line x1="841" y1="882.6" x2="888.4" y2="912.2" stroke="#b85f60" stroke-width="8.8" stroke-linecap="round"/><line x1="842.4" y1="881.2" x2="889" y2="910.4" stroke="#df8886" stroke-width="3" /><ellipse cx="889.6" cy="913" rx="2.6" ry="4.2" fill="#a85256" transform="rotate(-58 889.6 913)"/><line x1="844" y1="878.2" x2="892.6" y2="851.6" stroke="#3f8a40" stroke-width="8.8" stroke-linecap="round"/><line x1="844" y1="877.4" x2="892" y2="851" stroke="#5fa85e" stroke-width="3" /><rect x="835.9" y="823.4" width="9.1" height="59.2" fill="url(#uz)" rx="2.2"/><ellipse cx="840.4" cy="824.2" rx="4.5" ry="2.4" fill="#41639a"/><path d="M836.800 825.600a3.200 2.200 0 0 1 4-2.600l-1.400 2.600z" fill="#a4c9f4"/><text x="835.8" y="817.6" font-size="24.8" fill="#1d6ff0" textLength="21.4" lengthAdjust="spacingAndGlyphs" class="ucs">Z</text><text x="888.8" y="841.8" font-size="24.2" fill="#22b022" textLength="20.6" lengthAdjust="spacingAndGlyphs" class="ucs">Y</text><text x="883.4" y="908.8" font-size="25.4" fill="#d93a24" textLength="21.4" lengthAdjust="spacingAndGlyphs" class="ucs">X</text><line x1="1860.5" y1="908" x2="1860.5" y2="1019" stroke="#7b7bf2" stroke-width="1.1" /><line x1="1826.2" y1="1001.7" x2="1931.8" y2="942.3" stroke="#6fe36f" stroke-width="1.1" /><line x1="1829.2" y1="960.3" x2="1924.7" y2="1025.7" stroke="#f07a7a" stroke-width="1.1" /><rect x="1856.3" y="977" width="8.4" height="8.4" fill="#212830" stroke="#ffffff" stroke-width="1.2"/><circle cx="1877.7" cy="964.8" r="6.2" fill="#f4f4f4" stroke="#9a9a9a" stroke-width="0.6"/><path d="M1873.400 965.400h8.600a4.300 3 0 0 1 -8.600 0z" fill="#101216"/><defs><linearGradient id="vcF" x1="0" y1="0" x2="1" y2="1"><stop offset="0" stop-color="#b6b8bb"/><stop offset="1" stop-color="#999b9f"/></linearGradient><linearGradient id="vcR" x1="0" y1="0" x2="0.6" y2="1"><stop offset="0" stop-color="#a9abaf"/><stop offset="1" stop-color="#96989c"/></linearGradient><radialGradient id="vcS" cx="0.5" cy="0.5" r="0.5"><stop offset="0" stop-color="#5a606b" stop-opacity="0.75"/><stop offset="1" stop-color="#2a3039" stop-opacity="0"/></radialGradient></defs><path d="M2334.3 464.5a94.7 67.4 0 1 0 189.4 0a94.7 67.4 0 1 0 -189.4 0zM2354.9 463a74.1 49.5 0 1 0 148.2 0a74.1 49.5 0 1 0 -148.2 0z" fill="#464d58" fill-rule="evenodd"/><ellipse cx="2427" cy="470" rx="58" ry="36" fill="url(#vcS)"/><text transform="translate(2368.5 424.5) rotate(-24) skewX(-30) scale(1.35 0.78)" x="0" y="0" text-anchor="middle" font-size="24" font-weight="700" fill="#b7babd" stroke="#b7babd" stroke-width="0.7">W</text><text transform="translate(2491 429) rotate(24) skewX(30) scale(1.35 0.74)" x="0" y="0" text-anchor="middle" font-size="22" font-weight="700" fill="#b7babd" stroke="#b7babd" stroke-width="0.7">N</text><text transform="translate(2357 510.5) rotate(-28) skewX(-12) scale(1.45 0.86)" x="0" y="0" text-anchor="middle" font-size="28" font-weight="700" fill="#b7babd" stroke="#b7babd" stroke-width="0.7">S</text><text transform="translate(2492.5 514) rotate(36) skewX(14) scale(1.5 0.86)" x="0" y="0" text-anchor="middle" font-size="27" font-weight="700" fill="#b7babd" stroke="#b7babd" stroke-width="0.7">E</text><path d="M2376.5 396.3L2431.3 369.4L2482.1 399.3L2426.2 430.5z" fill="#b0b3b7"/><path d="M2376.5 396.3L2426.2 430.5L2426.2 488.4L2380.4 451.1z" fill="url(#vcF)"/><path d="M2426.2 430.5L2482.1 399.3L2477.6 454.1L2426.2 488.4z" fill="url(#vcR)"/><path d="M2376.5 396.3L2426.2 430.5L2482.1 399.3" fill="none" stroke="#70757e" stroke-width="0.8"/><line x1="2426.2" y1="430.5" x2="2426.2" y2="488.4" stroke="#70757e" stroke-width="0.9" stroke-dasharray="9 3"/><path d="M2416 425.5L2426.5 418.5L2437 425.5L2436 436.5L2426.2 443L2416.6 436.5z" fill="#a9aebb" fill-opacity="0.8"/><path d="M2416.4 425.8L2426.2 430.5L2436.8 425.8M2426.2 430.5V443" fill="none" stroke="#8e939e" stroke-width="0.7"/><text transform="matrix(0.86 0.46 -0.78 0.5 2430.2 398.4)" x="0" y="4.5" text-anchor="middle" font-size="13" font-weight="700" fill="#4d5561">TOP</text><text transform="matrix(1 0.6873 0.0000 1 2402.6 446.6)" x="0" y="0" text-anchor="middle" font-size="12.4" font-weight="700" fill="#4d5561" textLength="34" lengthAdjust="spacingAndGlyphs">FRONT</text><text transform="matrix(1 -0.5543 0.0000 1 2453.6 448)" x="0" y="0" text-anchor="middle" font-size="12.4" font-weight="700" fill="#4d5561" textLength="35" lengthAdjust="spacingAndGlyphs">RIGHT</text><rect x="2395" y="557.8" width="68.6" height="25" fill="#9396a6" stroke="#a3a6b6" stroke-width="1" rx="4"/><text x="2401.8" y="574.4" font-size="15.4" fill="#5a5f6c" textLength="34.2" lengthAdjust="spacingAndGlyphs">WCS</text><path d="M2445.4 566.2h11.4l-5.7 6.2z" fill="#9da0b0" stroke="#b4b7c4" stroke-width="0.9"/><rect x="2503" y="615.8" width="46" height="311" fill="#585d66" stroke="#3b4049" stroke-width="1" rx="3"/><circle cx="2540" cy="623" r="4.6" fill="#4a4f58"/><path d="M2537.8 620.8l4.4 4.4M2542.2 620.8l-4.4 4.4" fill="none" stroke="#686d76" stroke-width="1"/><path d="M2525.8 641.4h10.4a5 5 0 0 1 5 5v11.4a15.4 15.4 0 1 1 -15.4 -16.4z" fill="none" stroke="#464b54" stroke-width="1.6"/><circle cx="2525.8" cy="657.2" r="8.4" fill="none" stroke="#464b54" stroke-width="1.6"/><path d="M2519.6 663l-5 6M2532 663l5 6" fill="none" stroke="#464b54" stroke-width="1.4"/><path d="M2522.5 684.75h8l-4 4.5z" fill="#464b54"/><line x1="2505.5" y1="697.3" x2="2546.5" y2="697.3" stroke="#51565f" stroke-width="1" /><path d="M2519 726.5l-1.5-13.5a2 2 0 0 1 3.8 -0.4l1.4 8 0.4-14a2 2 0 0 1 4 0l0.6 13.6 2-12a2 2 0 0 1 3.9 0.6l-1.6 12.8 3.4-8a1.9 1.9 0 0 1 3.6 1.2l-3 11c-1.4 6-3.6 10.4-8 10.4h-4c-4 0-7.6-3.6-10-7.4l-5-7.6a2.2 2.2 0 0 1 3.2 -2.8z" fill="none" stroke="#464b54" stroke-width="1.6" stroke-linejoin="round"/><path d="M2509 747l20 20M2529 747l-20 20" fill="none" stroke="#464b54" stroke-width="1.6"/><path d="M2507.6 745.6h6l-6 6zM2530.4 745.6h-6l6 6zM2507.6 768.4h6l-6-6z" fill="#464b54"/><circle cx="2531.4" cy="767.2" r="6.2" fill="#585d66" stroke="#464b54" stroke-width="1.7"/><line x1="2536" y1="772" x2="2542.6" y2="779" stroke="#464b54" stroke-width="3" /><path d="M2522.5 789.55h8l-4 4.5z" fill="#464b54"/><path d="M2525 803l5.4 6.6h-3v24.4h-4.8v-24.4h-3z" fill="none" stroke="#464b54" stroke-width="1.5" stroke-linejoin="round"/><path d="M2521 815.6c-8 1-13 3.4-13 6.2 0 3.8 7.6 6.6 17 6.6s17-2.8 17-6.6c0-2.8-5-5.200-13-6.2" fill="none" stroke="#464b54" stroke-width="1.5"/><path d="M2512 826.4l6.600-4.8v9.6z" fill="#464b54"/><path d="M2522.5 846.65h8l-4 4.5z" fill="#464b54"/><line x1="2505.5" y1="858.7" x2="2546.5" y2="858.7" stroke="#51565f" stroke-width="1" /><rect x="2508.4" y="866" width="9.4" height="9.6" fill="none" stroke="#464b54" stroke-width="1.4" rx="1"/><rect x="2520.4" y="866" width="9.4" height="9.6" fill="none" stroke="#464b54" stroke-width="1.4" rx="1"/><rect x="2532.4" y="866" width="9.4" height="9.6" fill="none" stroke="#464b54" stroke-width="1.4" rx="1"/><rect x="2508.4" y="880" width="24" height="19.4" fill="none" stroke="#464b54" stroke-width="1.5" rx="1"/><path d="M2516 884.6l9.4 5.200-9.4 5.200z" fill="#464b54"/><circle cx="2540" cy="917.8" r="4.6" fill="#4a4f58"/><rect x="2537.4" y="916.4" width="5.2" height="2.6" fill="#686d76" rx="1"/><rect x="557.6" y="1249" width="38" height="184" fill="#2a303b" rx="2"/><rect x="564.4" y="1257.2" width="2" height="2" fill="#c8ccd2"/><rect x="569" y="1257.2" width="2" height="2" fill="#c8ccd2"/><rect x="573.6" y="1257.2" width="2" height="2" fill="#c8ccd2"/><rect x="578.2" y="1257.2" width="2" height="2" fill="#c8ccd2"/><rect x="582.8" y="1257.2" width="2" height="2" fill="#c8ccd2"/><rect x="587.4" y="1257.2" width="2" height="2" fill="#c8ccd2"/><path d="M569.6 1278l12 12M581.6 1278l-12 12" fill="none" stroke="#e2e2e2" stroke-width="3"/><path d="M567.5 1329.500l12.5-12.5" fill="none" stroke="#d8d8d8" stroke-width="4.4" stroke-linecap="round"/><path d="M584.8 1308.8a6 6 0 1 0 3.4 7.6l-4.6 1.2-2.6-2.6z" fill="#d8d8d8"/><rect x="595.6" y="1250" width="1438.4" height="151" fill="#98999b"/><rect x="595.6" y="1401" width="1438.4" height="2.4" fill="#2a303b"/><rect x="595.6" y="1403.4" width="1438.4" height="29" fill="#bfc0c2"/><text x="599.6" y="1277.3" font-size="18.4" fill="#0a0a0a" textLength="164.48" lengthAdjust="spacingAndGlyphs" class="mono">Select objects:</text><text x="599.6" y="1300.28" font-size="18.4" fill="#0a0a0a" textLength="186.4" lengthAdjust="spacingAndGlyphs" class="mono">1 loop extracted.</text><text x="599.6" y="1323.26" font-size="18.4" fill="#0a0a0a" textLength="186.4" lengthAdjust="spacingAndGlyphs" class="mono">1 Region created.</text><text x="599.6" y="1346.24" font-size="18.4" fill="#0a0a0a" textLength="679.83" lengthAdjust="spacingAndGlyphs" class="mono">Command: Specify opposite corner or [Fence/WPolygon/CPolygon]:</text><text x="599.6" y="1369.22" font-size="18.4" fill="#0a0a0a" textLength="186.4" lengthAdjust="spacingAndGlyphs" class="mono">Command: *Cancel*</text><text x="599.6" y="1392.2" font-size="18.4" fill="#0a0a0a" textLength="87.72" lengthAdjust="spacingAndGlyphs" class="mono">Command:</text><rect x="602.4" y="1410.4" width="22.4" height="16.6" fill="#c8c9cb" stroke="#4a4d52" stroke-width="1.2"/><rect x="602.4" y="1410.4" width="22.4" height="4.6" fill="#4a4d52"/><path d="M605 1419l3 2-3 2M609.600 1423.4h4" fill="none" stroke="#3a3d42" stroke-width="0.9"/><path d="M629.8 1415.8h10.4l-5.2 5.6z" fill="#4a4d52"/><text x="651" y="1424.2" font-size="18.4" fill="#6e7075" textLength="152.5" lengthAdjust="spacingAndGlyphs" font-style="italic" class="mono">Type a command</text><path d="M2018.4 1421.2l4.6-5.4 4.6 5.4z" fill="#5a5d62"/></svg></div>
<div class="sec layouttabs" style="left:0px;top:1432px;width:2556px;height:50px"><svg width="2556" height="50" viewBox="0 1432 2556 50"><rect x="0" y="1432" width="2556" height="50" fill="#222933"/><rect x="42" y="1432" width="2510" height="2" fill="#212830"/><rect x="4" y="1432" width="38" height="8" fill="#3b4453"/><rect x="42" y="1433.8" width="2510" height="6.2" fill="#3b4453"/><path d="M17.1 1476L32 1439.6L121.9 1439.6L107 1476z" fill="#3b4453"/><text x="42.9" y="1466" font-size="18.5" fill="#ffffff" textLength="53" lengthAdjust="spacingAndGlyphs" font-weight="700">Model</text><text x="133" y="1465.6" font-size="18.4" fill="#e8e8e8" textLength="17.8" lengthAdjust="spacingAndGlyphs">a3</text><line x1="165.4" y1="1469.6" x2="175.4" y2="1446.6" stroke="#4a5566" stroke-width="1.3" /><path d="M190.800 1458.6h18.4M200 1449.4v18.4" fill="none" stroke="#e6e6e6" stroke-width="3"/><line x1="225.4" y1="1469.6" x2="235.4" y2="1446.6" stroke="#4a5566" stroke-width="1.3" /></svg></div>
<div class="sec statusbar" style="left:0px;top:1482px;width:2556px;height:46px"><svg width="2556" height="46" viewBox="0 1482 2556 46"><rect x="0" y="1482" width="2556" height="46" fill="#222933"/><rect x="7" y="1486" width="1630.2" height="36" fill="#3b4453"/><rect x="1643.8" y="1486" width="72.3" height="36" fill="#3b4453"/><rect x="1721.8" y="1486" width="96.2" height="36" fill="#3b4453"/><rect x="1824" y="1486" width="36" height="36" fill="#3b4453"/><rect x="1861.9" y="1486" width="156.1" height="36" fill="#3b4453"/><rect x="2090.9" y="1486" width="25.1" height="36" fill="#3b4453"/><rect x="2157" y="1486" width="123" height="36" fill="#3b4453"/><rect x="2286.1" y="1486" width="59.6" height="36" fill="#3b4453"/><rect x="2348.2" y="1486" width="35.5" height="36" fill="#3b4453"/><rect x="2390.2" y="1486" width="35.9" height="36" fill="#3b4453"/><rect x="2430.1" y="1486" width="43.6" height="36" fill="#3b4453"/><rect x="2477.8" y="1486" width="72" height="36" fill="#3b4453"/><rect x="2018" y="1486" width="72.9" height="36" fill="#3b4453"/><rect x="2020.9" y="1487" width="34.1" height="34" fill="#5d8ec6"/><rect x="2057.2" y="1487" width="33.7" height="34" fill="#5d8ec6"/><rect x="2122.9" y="1487" width="34.1" height="34" fill="#5d8ec6"/><rect x="2116" y="1486" width="6.9" height="36" fill="#222933"/><text x="1650.3" y="1511" font-size="19" fill="#f4f4f4" textLength="60.7" lengthAdjust="spacingAndGlyphs">MODEL</text><path d="M1733.7 1492.1v23.2M1739.8 1492.1v23.2M1745.8 1492.1v23.2M1727.9 1498.1h23.2M1727.9 1504h23.2M1727.9 1509.7h23.2" fill="none" stroke="#dcdcdc" stroke-width="1.3"/><rect x="1767.1" y="1494.9" width="3" height="3" fill="#dcdcdc"/><rect x="1767.1" y="1502.1" width="3" height="3" fill="#dcdcdc"/><rect x="1767.1" y="1509.1" width="3" height="3" fill="#dcdcdc"/><rect x="1774.2" y="1494.9" width="3" height="3" fill="#dcdcdc"/><rect x="1774.2" y="1502.1" width="3" height="3" fill="#dcdcdc"/><rect x="1774.2" y="1509.1" width="3" height="3" fill="#dcdcdc"/><rect x="1781.1" y="1494.9" width="3" height="3" fill="#dcdcdc"/><rect x="1781.1" y="1502.1" width="3" height="3" fill="#dcdcdc"/><rect x="1781.1" y="1509.1" width="3" height="3" fill="#dcdcdc"/><path d="M1799.7 1500.5h12.6l-6.3 6.6z" fill="#d6d6d6"/><path d="M1830 1501h11M1835.5 1495.5v11" fill="none" stroke="#dcdcdc" stroke-width="1.3"/><rect x="1839.4" y="1507.2" width="14.4" height="6" fill="#dcdcdc"/><rect x="1840.8" y="1508.6" width="2.4" height="3.2" fill="#3b4453"/><path d="M1868.5 1492v23.2h23.700M1868.5 1508.2h7v7" fill="none" stroke="#dcdcdc" stroke-width="1.3"/><circle cx="1913.5" cy="1504.4" r="9.4" fill="none" stroke="#dcdcdc" stroke-width="1.3"/><path d="M1927.700 1504.4h-14.2l10.8-10" fill="none" stroke="#dcdcdc" stroke-width="1.3"/><path d="M1939.4 1500.5h12.6l-6.3 6.6z" fill="#d6d6d6"/><line x1="1976" y1="1492" x2="1976" y2="1514" stroke="#35c24e" stroke-width="1.3" /><line x1="1966.9" y1="1494.4" x2="1984.9" y2="1512" stroke="#e0504c" stroke-width="1.3" /><rect x="1974.2" y="1501.2" width="3.6" height="3.6" fill="#3b4453" stroke="#f4f4f4" stroke-width="1"/><path d="M1999.4 1500.5h12.6l-6.3 6.6z" fill="#d6d6d6"/><path d="M2044.500 1495l-17.900 17h23.2" fill="none" stroke="#f4f4f4" stroke-width="1.4"/><rect x="2033.2" y="1502.2" width="3.8" height="3.8" fill="#f4f4f4"/><rect x="2065.4" y="1495.2" width="19.8" height="20.2" fill="none" stroke="#f4f4f4" stroke-width="1.4"/><rect x="2062.2" y="1492.6" width="6.4" height="6.4" fill="#5d8ec6" stroke="#f4f4f4" stroke-width="1.2"/><path d="M2097.7 1500.5h12.6l-6.3 6.6z" fill="#d6d6d6"/><path d="M2136.6 1492.4l3.400 10.400 2.600-1.200-1.200 4.400 5.600 10.600-10.400-6.200-10.400 6.200 5.600-10.600-1.200-4.400 2.600 1.200z" fill="#f8f8f8"/><circle cx="2147.4" cy="1497.4" r="3.8" fill="none" stroke="#f8f8f8" stroke-width="1.2"/><path d="M2174 1492.4l3.400 10.400 2.600-1.200-1.200 4.400 5.600 10.600-10.400-6.200-10.400 6.200 5.600-10.600-1.200-4.400 2.600 1.200z" fill="#e0e0e0"/><path d="M2185.400 1494l-4.600 6h3l-2.600 5.4 6-7.2h-3l2.600-4.2z" fill="#e0e0e0"/><path d="M2211.3 1492.4l3.400 10.400 2.600-1.200-1.200 4.400 5.600 10.600-10.400-6.200-10.400 6.200 5.600-10.600-1.200-4.400 2.600 1.200z" fill="#e0e0e0"/><text x="2238.4" y="1511" font-size="18.6" fill="#f4f4f4" textLength="16.6" lengthAdjust="spacingAndGlyphs" font-weight="700">1:1</text><path d="M2261.8 1500.5h12.6l-6.3 6.6z" fill="#d6d6d6"/><circle cx="2303.7" cy="1504" r="7" fill="none" stroke="#dedede" stroke-width="5"/><line x1="2312.1" y1="1504" x2="2315.5" y2="1504" stroke="#dedede" stroke-width="4.4" /><line x1="2309.64" y1="1509.94" x2="2312.04" y2="1512.34" stroke="#dedede" stroke-width="4.4" /><line x1="2303.7" y1="1512.4" x2="2303.7" y2="1515.8" stroke="#dedede" stroke-width="4.4" /><line x1="2297.76" y1="1509.94" x2="2295.36" y2="1512.34" stroke="#dedede" stroke-width="4.4" /><line x1="2295.3" y1="1504" x2="2291.9" y2="1504" stroke="#dedede" stroke-width="4.4" /><line x1="2297.76" y1="1498.06" x2="2295.36" y2="1495.66" stroke="#dedede" stroke-width="4.4" /><line x1="2303.7" y1="1495.6" x2="2303.7" y2="1492.2" stroke="#dedede" stroke-width="4.4" /><line x1="2309.64" y1="1498.06" x2="2312.04" y2="1495.66" stroke="#dedede" stroke-width="4.4" /><path d="M2327.7 1500.5h12.6l-6.3 6.6z" fill="#d6d6d6"/><path d="M2354.400 1503.8h22.600M2365.700 1492.5v22.600" fill="none" stroke="#e6e6e6" stroke-width="3"/><rect x="2396.6" y="1493" width="9" height="8.6" fill="none" stroke="#dcdcdc" stroke-width="1.2"/><circle cx="2414.4" cy="1502.6" r="5.2" fill="none" stroke="#dcdcdc" stroke-width="1.2"/><path d="M2405.400 1507.600l5 7.600h-10z" fill="none" stroke="#dcdcdc" stroke-width="1.1"/><path d="M2434.600 1485.600h21l8 8v18h-29z" fill="#3f72b5"/><path d="M2455.600 1485.600l8 8h-8z" fill="#6f9ad0"/><path d="M2434.600 1494h14M2441.400 1486v22" fill="none" stroke="#b8d8f8" stroke-width="1.4"/><circle cx="2441.4" cy="1494" r="2.6" fill="#3f72b5" stroke="#d8ecff" stroke-width="1.3"/><path d="M2434.600 1506.600h13l3 5-3 5h-13z" fill="#f3b229"/><path d="M2449.500 1512l6 6 14-13.5" fill="none" stroke="#3bb54a" stroke-width="4"/><rect x="2484.2" y="1495.2" width="23.4" height="16.4" fill="none" stroke="#dcdcdc" stroke-width="1.3"/><path d="M2499.400 1502l5.600-4.600M2501.400 1497.200h3.800v3.800M2491.400 1505.200l-5.400 4.400M2489.600 1509.800h-3.800v-3.800" fill="none" stroke="#dcdcdc" stroke-width="1.3"/><rect x="2519.4" y="1492.4" width="25.2" height="4.2" fill="#303848"/><rect x="2520" y="1493" width="24" height="3" fill="#e6e6e6"/><rect x="2519.4" y="1501.4" width="25.2" height="4.2" fill="#303848"/><rect x="2520" y="1502" width="24" height="3" fill="#e6e6e6"/><rect x="2519.4" y="1510.4" width="25.2" height="4.2" fill="#303848"/><rect x="2520" y="1511" width="24" height="3" fill="#e6e6e6"/></svg></div>
<div class="frame"></div>
</body></html>
